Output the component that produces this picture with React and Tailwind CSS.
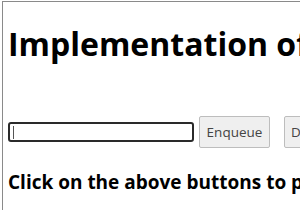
export default function App() {
  return (
    <div className="w-[300px] h-[210px] overflow-hidden bg-white">
      <div className="ml-[2px] mt-[1px] h-[209px] border-l border-t border-[#8a8a8a] pl-[5px] whitespace-nowrap" style={{ fontFamily: '"Open Sans", "Noto Sans", sans-serif' }}>
        <h1 className="mt-[22px] text-[32px] font-bold leading-[40px] text-black">Implementation of Queue</h1>
        <div className="mt-[52px] flex items-center gap-[5px]">
          <div className="shrink-0 w-[186px] h-[20px] rounded-[3px] border-2 border-[#2a2a2a] bg-white flex items-center pl-[3px]">
            <div className="w-px h-[13px] bg-[#555]"></div>
          </div>
          <button className="shrink-0 h-[32px] w-[71px] rounded-[2px] border border-[#bdbdbd] bg-[#efefef] text-[13.5px] text-[#444]">Enqueue</button>
          <button className="shrink-0 ml-[9px] h-[32px] w-[71px] rounded-[2px] border border-[#bdbdbd] bg-[#efefef] text-[13.5px] text-[#444] text-left pl-[6px]">Dequeue</button>
        </div>
        <p className="mt-[22px] text-[19px] font-bold leading-[24px] text-black">Click on the above buttons to perform</p>
      </div>
    </div>
  );
}
